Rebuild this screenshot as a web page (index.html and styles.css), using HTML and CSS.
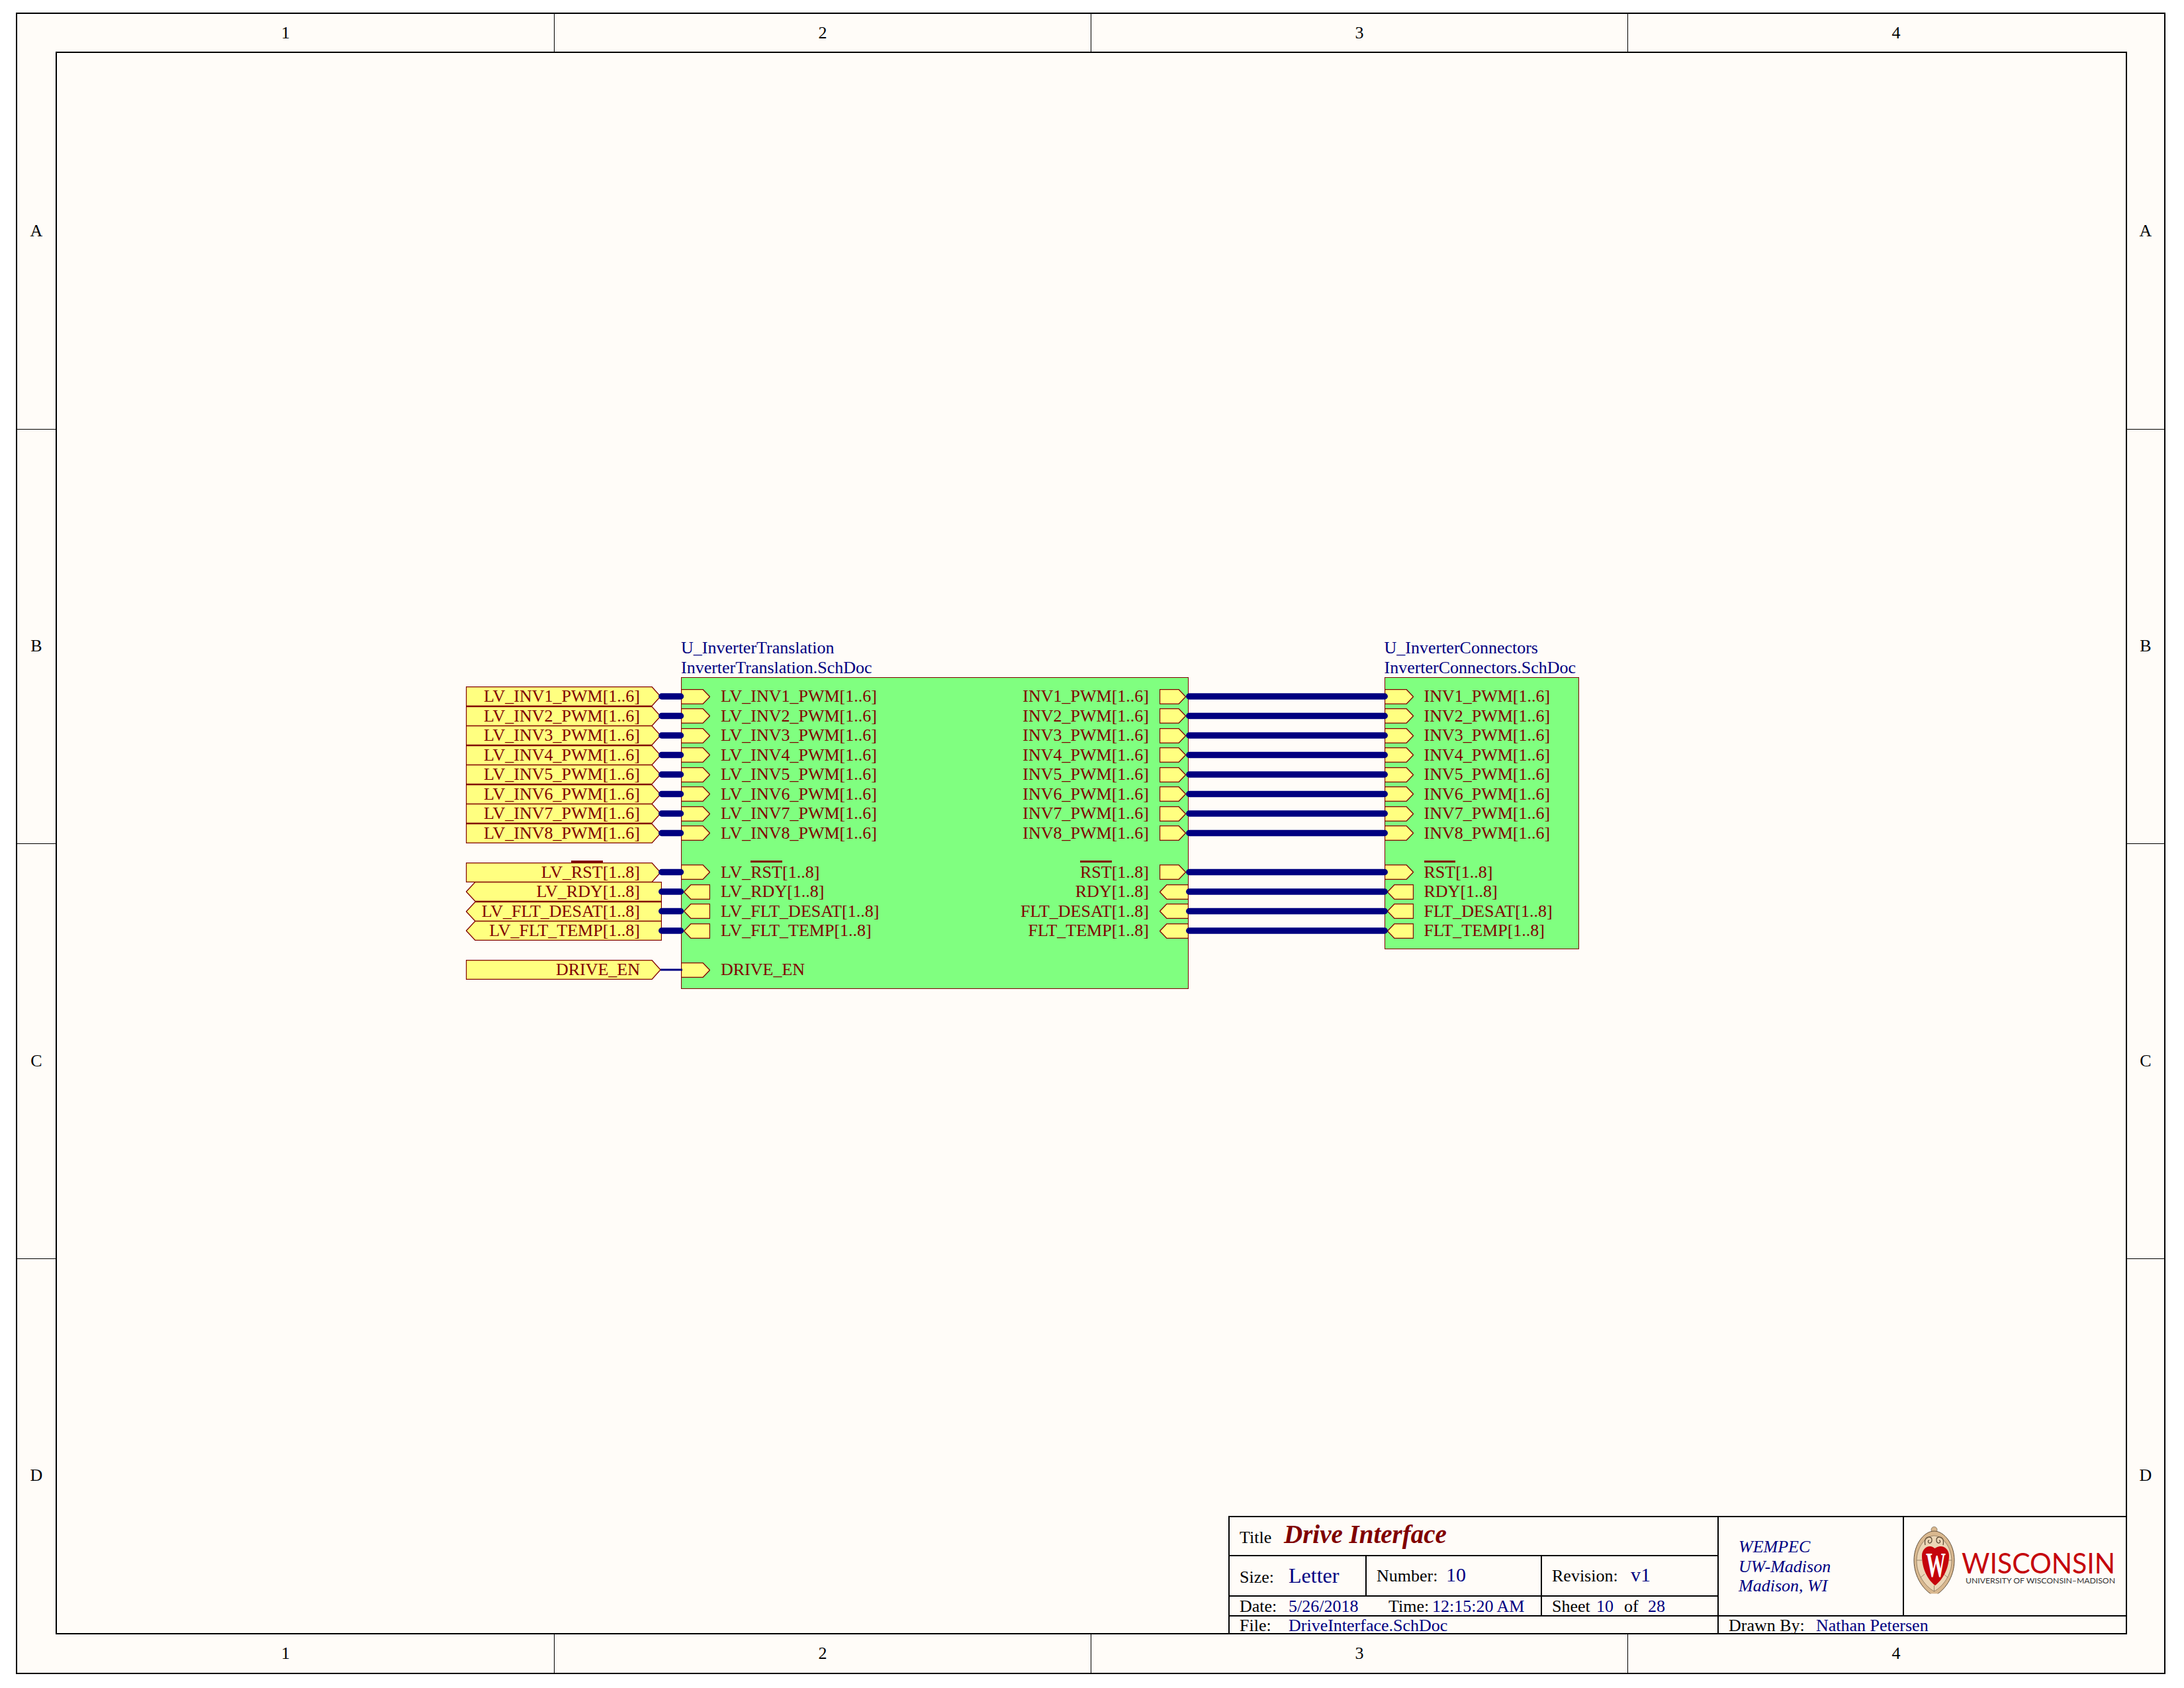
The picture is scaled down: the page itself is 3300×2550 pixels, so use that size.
FILE: index.html
```html
<!DOCTYPE html>
<html lang="en">
<head>
<meta charset="UTF-8">
<title>Drive Interface</title>
<link rel="stylesheet" href="styles.css">
</head>
<body>
<svg class="defs" width="0" height="0">
    <symbol id="pin-out" viewBox="0 0 44 23"><polygon points="0.5,0.5 33,0.5 43.5,11.5 33,22.5 0.5,22.5"/></symbol>
    <symbol id="pin-in" viewBox="0 0 44 23"><polygon points="4.5,11.5 15,0.5 43.5,0.5 43.5,22.5 15,22.5"/></symbol>
    <symbol id="pin-out-r" viewBox="0 0 44 23"><polygon points="0.5,0.5 29,0.5 39.5,11.5 29,22.5 0.5,22.5"/></symbol>
    <symbol id="pin-in-r" viewBox="0 0 44 23"><polygon points="0.5,11.5 11,0.5 43.5,0.5 43.5,22.5 11,22.5"/></symbol>
    <symbol id="port-out" viewBox="0 0 296 30"><polygon points="0.5,0.5 281,0.5 294,15 281,29.5 0.5,29.5"/></symbol>
    <symbol id="port-in" viewBox="0 0 296 30"><polygon points="0.5,15 14,0.5 295.5,0.5 295.5,29.5 14,29.5"/></symbol>
</svg>

<div class="sheet">
    <div class="frame">
        <div class="band band-top">
            <div class="zone">1</div><div class="zone">2</div><div class="zone">3</div><div class="zone">4</div>
        </div>
        <div class="band band-bottom">
            <div class="zone">1</div><div class="zone">2</div><div class="zone">3</div><div class="zone">4</div>
        </div>
        <div class="band band-left">
            <div class="zone">A</div><div class="zone">B</div><div class="zone">C</div><div class="zone">D</div>
        </div>
        <div class="band band-right">
            <div class="zone">A</div><div class="zone">B</div><div class="zone">C</div><div class="zone">D</div>
        </div>

        <div class="drawing">
            <div class="title-block">
                <div class="cell cell-title">
                    <span class="lbl lbl-title">Title</span><span class="doc-title">Drive Interface</span>
                </div>
                <div class="cell cell-org">WEMPEC<br>UW-Madison<br>Madison, WI</div>
                <div class="cell cell-logo">
                    <svg class="logo" width="336" height="130" viewBox="4 0 336 130">
                        <defs><clipPath id="crest-clip"><rect x="10" y="5" width="80" height="107.500"/></clipPath></defs>
                        <g clip-path="url(#crest-clip)">
                            <circle cx="49.500" cy="16" r="4.500" fill="#d9b88f" stroke="#6b5a43" stroke-width="0.700"/>
                            <path d="M49.500 18C65 18 80 38 80 62C80 88 65 108 49.500 116C34 108 19 88 19 62C19 38 34 18 49.500 18Z" fill="#d9b88f" stroke="#5f4d38" stroke-width="1"/>
                            <path d="M49.500 25C62 25 76 42 76 63C76 85 62 102 49.500 109C37 102 23 85 23 63C23 42 37 25 49.500 25Z" fill="#ecd6b6" stroke="#7a664c" stroke-width="0.700"/>
                            <path d="M36 39C34 30 38 26 43 27C47 28 47 35 43 36C40 36.500 39.500 32 42 32M63 39C65 30 61 26 56 27C52 28 52 35 56 36C59 36.500 59.500 32 57 32" fill="none" stroke="#5f4d38" stroke-width="1.300"/>
                            <path d="M23 62H31M68 62H76M29 88L35 83M70 88L64 83M49.500 100V109" stroke="#7a664c" stroke-width="0.700"/>
                        </g>
                        <path d="M31 55C31 46 38 40 44 41C47 41.500 49 43 50.500 44C52 43 55 41.500 58 41C65 40 72 46 72 55C72 75 62 92 51 100C40 92 31 75 31 55Z" fill="#c5050c"/>
                        <text class="crest-w" x="37" y="87" textLength="30" lengthAdjust="spacingAndGlyphs">W</text>
                        <text class="logo-name" x="91" y="82" textLength="232" lengthAdjust="spacingAndGlyphs">WISCONSIN</text>
                        <text class="logo-sub" x="97" y="97" textLength="226" lengthAdjust="spacingAndGlyphs">UNIVERSITY OF WISCONSIN–MADISON</text>
                    </svg>
                </div>
                <div class="cell cell-size">
                    <span class="lbl lbl-size">Size:</span><span class="val val-lg">Letter</span>
                </div>
                <div class="cell cell-number">
                    <span class="lbl lbl-number">Number:</span><span class="val val-md">10</span>
                </div>
                <div class="cell cell-rev">
                    <span class="lbl lbl-rev">Revision:</span><span class="val val-md">v1</span>
                </div>
                <div class="cell cell-date">
                    <span class="lbl lbl-size">Date:</span><span class="val val-date">5/26/2018</span>
                    <span class="lbl lbl-time">Time:</span><span class="val">12:15:20 AM</span>
                </div>
                <div class="cell cell-sheet">
                    <span class="lbl lbl-sheet">Sheet</span><span class="val val-sheet">10</span>
                    <span class="lbl lbl-of">of</span><span class="val">28</span>
                </div>
                <div class="cell cell-file">
                    <span class="lbl lbl-size">File:</span><span class="val">DriveInterface.SchDoc</span>
                </div>
                <div class="cell cell-drawn">
                    <span class="lbl lbl-drawn">Drawn By:</span><span class="val">Nathan Petersen</span>
                </div>
            </div>
        </div>
    </div>

    <!-- off-sheet ports -->
    <div class="ports">
        <div class="port"><svg class="port-shape"><use href="#port-out"/></svg><span>LV_INV1_PWM[1..6]</span></div>
        <div class="port"><svg class="port-shape"><use href="#port-out"/></svg><span>LV_INV2_PWM[1..6]</span></div>
        <div class="port"><svg class="port-shape"><use href="#port-out"/></svg><span>LV_INV3_PWM[1..6]</span></div>
        <div class="port"><svg class="port-shape"><use href="#port-out"/></svg><span>LV_INV4_PWM[1..6]</span></div>
        <div class="port"><svg class="port-shape"><use href="#port-out"/></svg><span>LV_INV5_PWM[1..6]</span></div>
        <div class="port"><svg class="port-shape"><use href="#port-out"/></svg><span>LV_INV6_PWM[1..6]</span></div>
        <div class="port"><svg class="port-shape"><use href="#port-out"/></svg><span>LV_INV7_PWM[1..6]</span></div>
        <div class="port"><svg class="port-shape"><use href="#port-out"/></svg><span>LV_INV8_PWM[1..6]</span></div>
        <div class="port group-start"><svg class="port-shape"><use href="#port-out"/></svg><span>LV_<span class="over">RST</span>[1..8]</span></div>
        <div class="port"><svg class="port-shape"><use href="#port-in"/></svg><span>LV_RDY[1..8]</span></div>
        <div class="port"><svg class="port-shape"><use href="#port-in"/></svg><span>LV_FLT_DESAT[1..8]</span></div>
        <div class="port"><svg class="port-shape"><use href="#port-in"/></svg><span>LV_FLT_TEMP[1..8]</span></div>
        <div class="port group-start"><svg class="port-shape"><use href="#port-out"/></svg><span>DRIVE_EN</span></div>
    </div>

    <!-- sheet symbol: translation -->
    <div class="symbol symbol-translation">
        <div class="symbol-name">U_InverterTranslation<br>InverterTranslation.SchDoc</div>
        <div class="entries">
            <div class="entry"><svg class="pin"><use href="#pin-out"/></svg><span>LV_INV1_PWM[1..6]</span></div>
            <div class="entry"><svg class="pin"><use href="#pin-out"/></svg><span>LV_INV2_PWM[1..6]</span></div>
            <div class="entry"><svg class="pin"><use href="#pin-out"/></svg><span>LV_INV3_PWM[1..6]</span></div>
            <div class="entry"><svg class="pin"><use href="#pin-out"/></svg><span>LV_INV4_PWM[1..6]</span></div>
            <div class="entry"><svg class="pin"><use href="#pin-out"/></svg><span>LV_INV5_PWM[1..6]</span></div>
            <div class="entry"><svg class="pin"><use href="#pin-out"/></svg><span>LV_INV6_PWM[1..6]</span></div>
            <div class="entry"><svg class="pin"><use href="#pin-out"/></svg><span>LV_INV7_PWM[1..6]</span></div>
            <div class="entry"><svg class="pin"><use href="#pin-out"/></svg><span>LV_INV8_PWM[1..6]</span></div>
            <div class="entry group-start"><svg class="pin"><use href="#pin-out"/></svg><span>LV_<span class="over">RST</span>[1..8]</span></div>
            <div class="entry"><svg class="pin"><use href="#pin-in"/></svg><span>LV_RDY[1..8]</span></div>
            <div class="entry"><svg class="pin"><use href="#pin-in"/></svg><span>LV_FLT_DESAT[1..8]</span></div>
            <div class="entry"><svg class="pin"><use href="#pin-in"/></svg><span>LV_FLT_TEMP[1..8]</span></div>
            <div class="entry group-start"><svg class="pin"><use href="#pin-out"/></svg><span>DRIVE_EN</span></div>
        </div>
        <div class="entries entries-right">
            <div class="entry"><span>INV1_PWM[1..6]</span><svg class="pin"><use href="#pin-out-r"/></svg></div>
            <div class="entry"><span>INV2_PWM[1..6]</span><svg class="pin"><use href="#pin-out-r"/></svg></div>
            <div class="entry"><span>INV3_PWM[1..6]</span><svg class="pin"><use href="#pin-out-r"/></svg></div>
            <div class="entry"><span>INV4_PWM[1..6]</span><svg class="pin"><use href="#pin-out-r"/></svg></div>
            <div class="entry"><span>INV5_PWM[1..6]</span><svg class="pin"><use href="#pin-out-r"/></svg></div>
            <div class="entry"><span>INV6_PWM[1..6]</span><svg class="pin"><use href="#pin-out-r"/></svg></div>
            <div class="entry"><span>INV7_PWM[1..6]</span><svg class="pin"><use href="#pin-out-r"/></svg></div>
            <div class="entry"><span>INV8_PWM[1..6]</span><svg class="pin"><use href="#pin-out-r"/></svg></div>
            <div class="entry group-start"><span><span class="over">RST</span>[1..8]</span><svg class="pin"><use href="#pin-out-r"/></svg></div>
            <div class="entry"><span>RDY[1..8]</span><svg class="pin"><use href="#pin-in-r"/></svg></div>
            <div class="entry"><span>FLT_DESAT[1..8]</span><svg class="pin"><use href="#pin-in-r"/></svg></div>
            <div class="entry"><span>FLT_TEMP[1..8]</span><svg class="pin"><use href="#pin-in-r"/></svg></div>
        </div>
    </div>

    <!-- sheet symbol: connectors -->
    <div class="symbol symbol-connectors">
        <div class="symbol-name">U_InverterConnectors<br>InverterConnectors.SchDoc</div>
        <div class="entries">
            <div class="entry"><svg class="pin"><use href="#pin-out"/></svg><span>INV1_PWM[1..6]</span></div>
            <div class="entry"><svg class="pin"><use href="#pin-out"/></svg><span>INV2_PWM[1..6]</span></div>
            <div class="entry"><svg class="pin"><use href="#pin-out"/></svg><span>INV3_PWM[1..6]</span></div>
            <div class="entry"><svg class="pin"><use href="#pin-out"/></svg><span>INV4_PWM[1..6]</span></div>
            <div class="entry"><svg class="pin"><use href="#pin-out"/></svg><span>INV5_PWM[1..6]</span></div>
            <div class="entry"><svg class="pin"><use href="#pin-out"/></svg><span>INV6_PWM[1..6]</span></div>
            <div class="entry"><svg class="pin"><use href="#pin-out"/></svg><span>INV7_PWM[1..6]</span></div>
            <div class="entry"><svg class="pin"><use href="#pin-out"/></svg><span>INV8_PWM[1..6]</span></div>
            <div class="entry group-start"><svg class="pin"><use href="#pin-out"/></svg><span><span class="over">RST</span>[1..8]</span></div>
            <div class="entry"><svg class="pin"><use href="#pin-in"/></svg><span>RDY[1..8]</span></div>
            <div class="entry"><svg class="pin"><use href="#pin-in"/></svg><span>FLT_DESAT[1..8]</span></div>
            <div class="entry"><svg class="pin"><use href="#pin-in"/></svg><span>FLT_TEMP[1..8]</span></div>
        </div>
    </div>

    <!-- buses and the one single wire -->
    <svg class="wires" width="3300" height="2550">
        <path class="bus" d="M999.750 1052H1028.500M999.750 1081.500H1028.500M999.750 1111H1028.500M999.750 1140.500H1028.500M999.750 1170H1028.500M999.750 1199.500H1028.500M999.750 1229H1028.500M999.750 1258.500H1028.500M999.750 1317.500H1028.500M999.750 1347H1028.500M999.750 1376.500H1028.500M999.750 1406H1028.500"/>
        <path class="bus" d="M1796.750 1052H2092.250M1796.750 1081.500H2092.250M1796.750 1111H2092.250M1796.750 1140.500H2092.250M1796.750 1170H2092.250M1796.750 1199.500H2092.250M1796.750 1229H2092.250M1796.750 1258.500H2092.250M1796.750 1317.500H2092.250M1796.750 1347H2092.250M1796.750 1376.500H2092.250M1796.750 1406H2092.250"/>
        <path class="net" d="M998 1465H1031"/>
    </svg>
</div>
</body>
</html>
```

FILE: styles.css
```css
* { margin: 0; padding: 0; box-sizing: border-box; }
body {
    background: #fff;
    color: #000;
    font-family: "Liberation Serif", "Times New Roman", serif;
    font-size: 26px;
    line-height: 1;
}
.defs { position: absolute; }
.sheet {
    position: relative;
    width: 3300px;
    height: 2550px;
    padding: 19px 28px 21px 24px;
    overflow: hidden;
}
.frame {
    height: 100%;
    display: grid;
    grid-template-columns: 58px 1fr 56px;
    grid-template-rows: 57px 1fr 58px;
    border: 2px solid #000;
    background: #fffcf8;
}

/* zone strips */
.band { display: grid; }
.band-top, .band-bottom { grid-column: 1 / 4; grid-template-columns: repeat(4, 1fr); }
.band-top { grid-row: 1; }
.band-bottom { grid-row: 3; }
.band-left, .band-right { grid-row: 1 / 4; grid-template-rows: repeat(4, 1fr); }
.band-left { grid-column: 1; }
.band-right { grid-column: 3; }
.zone { display: flex; align-items: center; justify-content: center; }
.band-top .zone + .zone, .band-bottom .zone + .zone { border-left: 1px solid #000; }
.band-left .zone + .zone, .band-right .zone + .zone { border-top: 1px solid #000; }
.band-left .zone, .band-right .zone { padding-top: 30px; }

.drawing {
    grid-column: 2;
    grid-row: 2;
    display: flex;
    align-items: flex-end;
    justify-content: flex-end;
    border: 2px solid #000;
}

/* title block */
.title-block {
    display: grid;
    grid-template-columns: 207px 265px 267px 280px 337px;
    grid-template-rows: 59px 61px 30px 25px;
    width: 1356px;
    border-left: 2px solid #000;
    border-top: 2px solid #000;
    margin-bottom: 0;
}
.cell {
    display: flex;
    align-items: baseline;
    padding-left: 15px;
    border-bottom: 2px solid #000;
    border-right: 2px solid #000;
    white-space: nowrap;
}
.cell-title { grid-column: 1 / 4; padding-top: 6px; }
.cell-org {
    display: block;
    grid-column: 4;
    grid-row: 1 / 4;
    padding: 30px 0 0 30px;
    color: #000080;
    font-style: italic;
    line-height: 29.500px;
}
.cell-logo { display: block; grid-column: 5; grid-row: 1 / 4; padding: 3px 0 0; border-right: 0; }
.cell-size { padding-top: 13px; grid-column: 1; }
.cell-number { padding-top: 13px; grid-column: 2; }
.cell-rev { padding-top: 13px; grid-column: 3; }
.cell-date { grid-column: 1 / 3; padding-top: 2px; }
.cell-sheet { grid-column: 3; padding-top: 2px; }
.cell-file { grid-column: 1 / 4; padding-top: 1px; border-bottom: 0; }
.cell-drawn { grid-column: 4 / 6; padding-top: 1px; border-bottom: 0; border-right: 0; }
.val { color: #000080; }
.val-lg { font-size: 32px; }
.val-md { font-size: 30px; }
.doc-title { color: #800000; font-size: 39px; font-weight: bold; font-style: italic; }
.lbl-title { width: 67px; }
.lbl-size { width: 74px; }
.lbl-number { width: 105px; }
.lbl-rev { width: 119px; }
.val-date { width: 151px; }
.lbl-time { width: 66px; }
.lbl-sheet { width: 67px; }
.val-sheet { width: 42px; }
.lbl-of { width: 36px; }
.lbl-drawn { width: 132px; }
.logo { display: block; }
.crest-w { font: bold 53px "Liberation Serif", serif; fill: #fff; }
.logo-name { font: 42px Lato, sans-serif; fill: #c5050c; }
.logo-sub { font: 12px Lato, sans-serif; fill: #333; }

/* schematic */
.ports {
    position: absolute;
    left: 704px;
    top: 1037.250px;
    display: flex;
    flex-direction: column;
    width: 296px;
    color: #800000;
}
.port {
    position: relative;
    display: flex;
    align-items: center;
    justify-content: flex-end;
    height: 29.500px;
    padding-right: 33px;
}
.port span { position: relative; }
.port-shape { position: absolute; left: 0; top: 0; width: 296px; height: 30px; }
.port-shape, .pin { fill: #ffff80; stroke: #800000; stroke-width: 1.300; }
.group-start { margin-top: 29.500px; }

.symbol {
    position: absolute;
    top: 1023px;
    display: flex;
    justify-content: space-between;
    padding-top: 14.250px;
    background: #80ff80;
    outline: 1px solid #800000;
    outline-offset: -1px;
    color: #800000;
}
.symbol-translation { left: 1029px; width: 767px; height: 471px; }
.symbol-connectors { left: 2091.500px; width: 294px; height: 411px; }
.symbol-name {
    position: absolute;
    left: 0;
    bottom: 100%;
    color: #000080;
    line-height: 29.500px;
    white-space: nowrap;
}
.entries { display: flex; flex-direction: column; }
.entries-right { align-items: flex-end; }
.entry {
    display: flex;
    align-items: center;
    gap: 16px;
    height: 29.500px;
    white-space: nowrap;
}
.pin { flex: none; width: 44px; height: 23px; }
.over { position: relative; display: inline-block; }
.over::before {
    content: "";
    position: absolute;
    left: 0;
    right: 0;
    top: -5px;
    height: 3px;
    background: #800000;
}
.wires { position: absolute; left: 0; top: 0; pointer-events: none; }
.bus { fill: none; stroke: #000080; stroke-width: 9.500px; stroke-linecap: round; }
.net { fill: none; stroke: #000080; stroke-width: 3px; }
```
